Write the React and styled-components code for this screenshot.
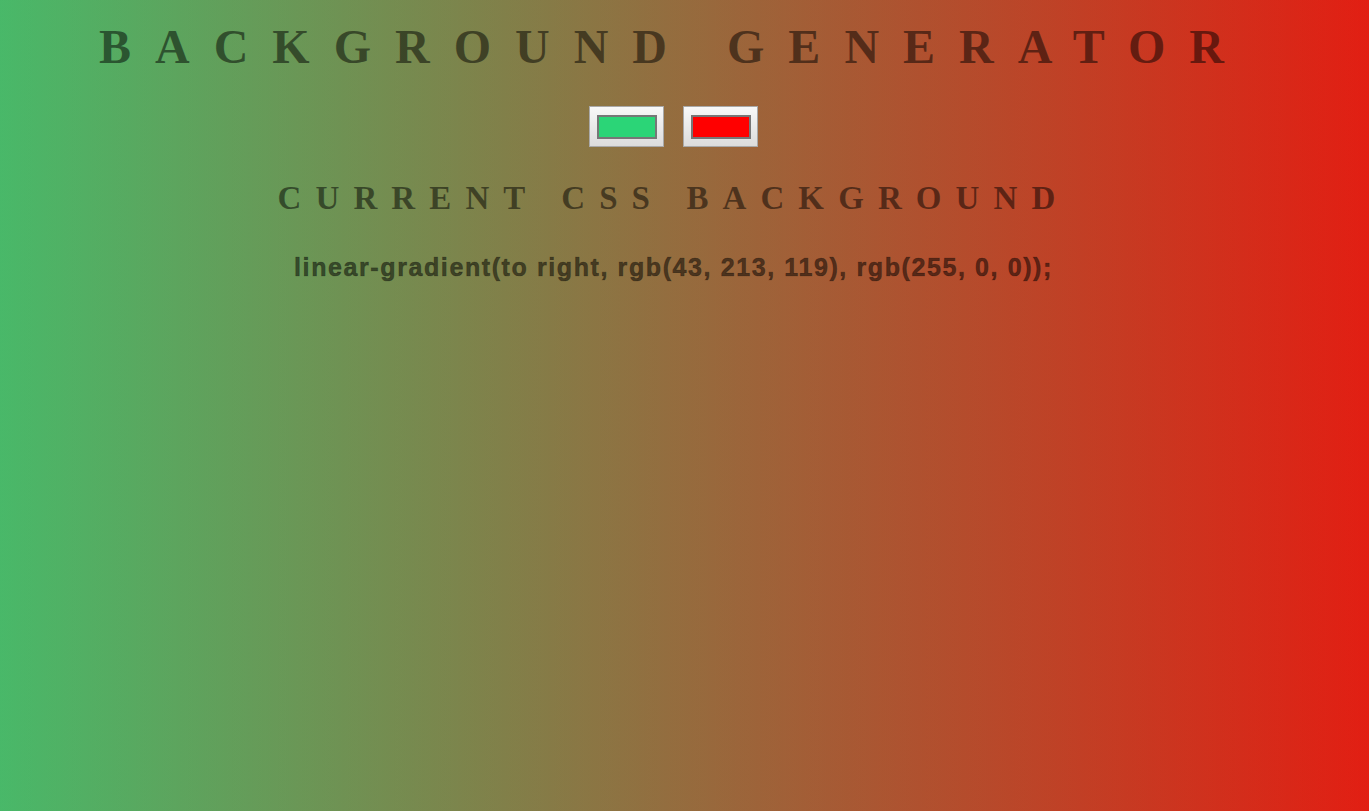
import React, { useState } from 'react'
import styled, { createGlobalStyle } from 'styled-components'

const GlobalStyle = createGlobalStyle`
  html, body {
    margin: 0;
    padding: 0;
  }
  body {
    font-family: "Liberation Serif", "Times New Roman", serif;
  }
`

const App = () => {
  const [from, setFrom] = useState('#2bd577')
  const [to, setTo] = useState('#ff0000')

  const rgb = (hex) => {
    const n = parseInt(hex.slice(1), 16)
    return `rgb(${(n >> 16) & 255}, ${(n >> 8) & 255}, ${n & 255})`
  }

  return (
    <Page $from={from} $to={to}>
      <GlobalStyle />
      <Title>Background Generator</Title>
      <Pickers>
        <ColorInput type='color' value={from} onChange={(e) => setFrom(e.target.value)} />
        <ColorInput type='color' value={to} onChange={(e) => setTo(e.target.value)} />
      </Pickers>
      <Subtitle>Current CSS Background</Subtitle>
      <Code>linear-gradient(to right, {rgb(from)}, {rgb(to)});</Code>
    </Page>
  )
}

const Page = styled.div`
  min-height: 100vh;
  box-sizing: border-box;
  padding: 19px 22px 0 0;
  display: flex;
  flex-direction: column;
  align-items: center;
  text-align: center;
  color: rgba(0, 0, 0, 0.5);
  background:
    linear-gradient(rgba(150, 110, 68, 0.28), rgba(150, 110, 68, 0.28)),
    linear-gradient(to right, ${(p) => p.$from}, ${(p) => p.$to});
`

const Title = styled.h1`
  margin: 0;
  font: 700 48px/1.149 "Liberation Serif", "Times New Roman", serif;
  text-transform: uppercase;
  letter-spacing: 0.5em;
`

const Pickers = styled.div`
  display: flex;
  gap: 19px;
  margin: 32px 0 0 0;
`

const ColorInput = styled.input`
  -webkit-appearance: none;
  appearance: none;
  box-sizing: border-box;
  width: 75px;
  height: 41px;
  margin: 0;
  padding: 0;
  border: 1px solid #a9a9a9;
  background: linear-gradient(#f8f8f8, #dcdcdc);
  cursor: pointer;

  &::-webkit-color-swatch-wrapper {
    padding: 8px 6px 7px 7px;
  }
  &::-webkit-color-swatch {
    border: 2px solid #777;
    border-radius: 0;
  }
`

const Subtitle = styled.h2`
  margin: 33px 0 0 0;
  font: 700 33px/1.149 "Liberation Serif", "Times New Roman", serif;
  text-transform: uppercase;
  letter-spacing: 14.1px;
`

const Code = styled.h3`
  margin: 35px 0 0 0;
  font: 700 25px/1.149 "Liberation Sans", Arial, sans-serif;
  letter-spacing: 1.6px;
  -webkit-text-stroke: 0.7px rgba(0, 0, 0, 0.35);
`

export default App
